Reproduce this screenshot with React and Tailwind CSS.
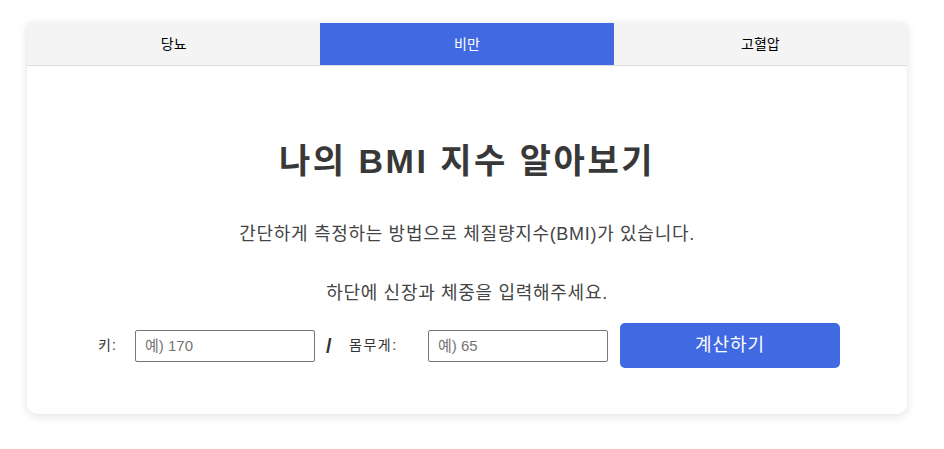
import { useState } from 'react';

const tabs = ['당뇨', '비만', '고혈압'];

const App = () => {
  const [active, setActive] = useState(1);

  return (
    <div
      className="w-[944px] h-[449px] bg-white pt-[23px]"
      style={{ fontFamily: '"Liberation Sans", Arial, "Noto Sans CJK KR", sans-serif' }}
    >
      <div className="ml-[27px] w-[880px] h-[391px] bg-white rounded-b-[10px] shadow-[0_2px_10px_rgba(0,0,0,0.12)] overflow-hidden">
        {/* Tabs */}
        <div className="flex h-[43px] border-b border-[#dddddd]">
          {tabs.map((t, i) => (
            <button
              key={t}
              onClick={() => setActive(i)}
              className={`flex-1 flex items-center justify-center text-[14px] ${
                active === i ? 'bg-[#4169e1] text-white' : 'bg-[#f4f4f4] text-black'
              }`}
            >
              {t}
            </button>
          ))}
        </div>

        {/* Body */}
        <div className="flex flex-col items-center pt-[75px]">
          <h1 className="text-[34px] leading-[40px] font-bold tracking-[2.5px] text-[#383838]">나의 BMI 지수 알아보기</h1>
          <p className="mt-[40px] text-[18px] leading-[27px] tracking-[0.7px] text-[#444444]">
            간단하게 측정하는 방법으로 체질량지수(BMI)가 있습니다.
          </p>
          <p className="mt-[32px] text-[18px] leading-[27px] tracking-[0.7px] text-[#444444]">
            하단에 신장과 체중을 입력해주세요.
          </p>
        </div>

        <div className="flex items-center pl-[71px] mt-[16px]">
          <span className="w-[37px] text-[14px] tracking-[1px] text-[#333333]">키:</span>
          <input
            placeholder="예) 170"
            className="w-[180px] h-[32px] border border-[#767676] rounded-[2px] px-[9px] text-[15px] placeholder:text-[#757575] outline-none"
          />
          <span className="w-[34px] pl-[11px] text-[20px] font-bold text-[#333333]">/</span>
          <span className="w-[79px] text-[14px] tracking-[1.5px] text-[#333333]">몸무게:</span>
          <input
            placeholder="예) 65"
            className="w-[180px] h-[32px] border border-[#767676] rounded-[2px] px-[9px] text-[15px] placeholder:text-[#757575] outline-none"
          />
          <button className="ml-[12px] w-[220px] h-[45px] bg-[#4169e1] text-white text-[18px] tracking-[1px] rounded-[5px]">
            계산하기
          </button>
        </div>
      </div>
    </div>
  );
};

export default App;
